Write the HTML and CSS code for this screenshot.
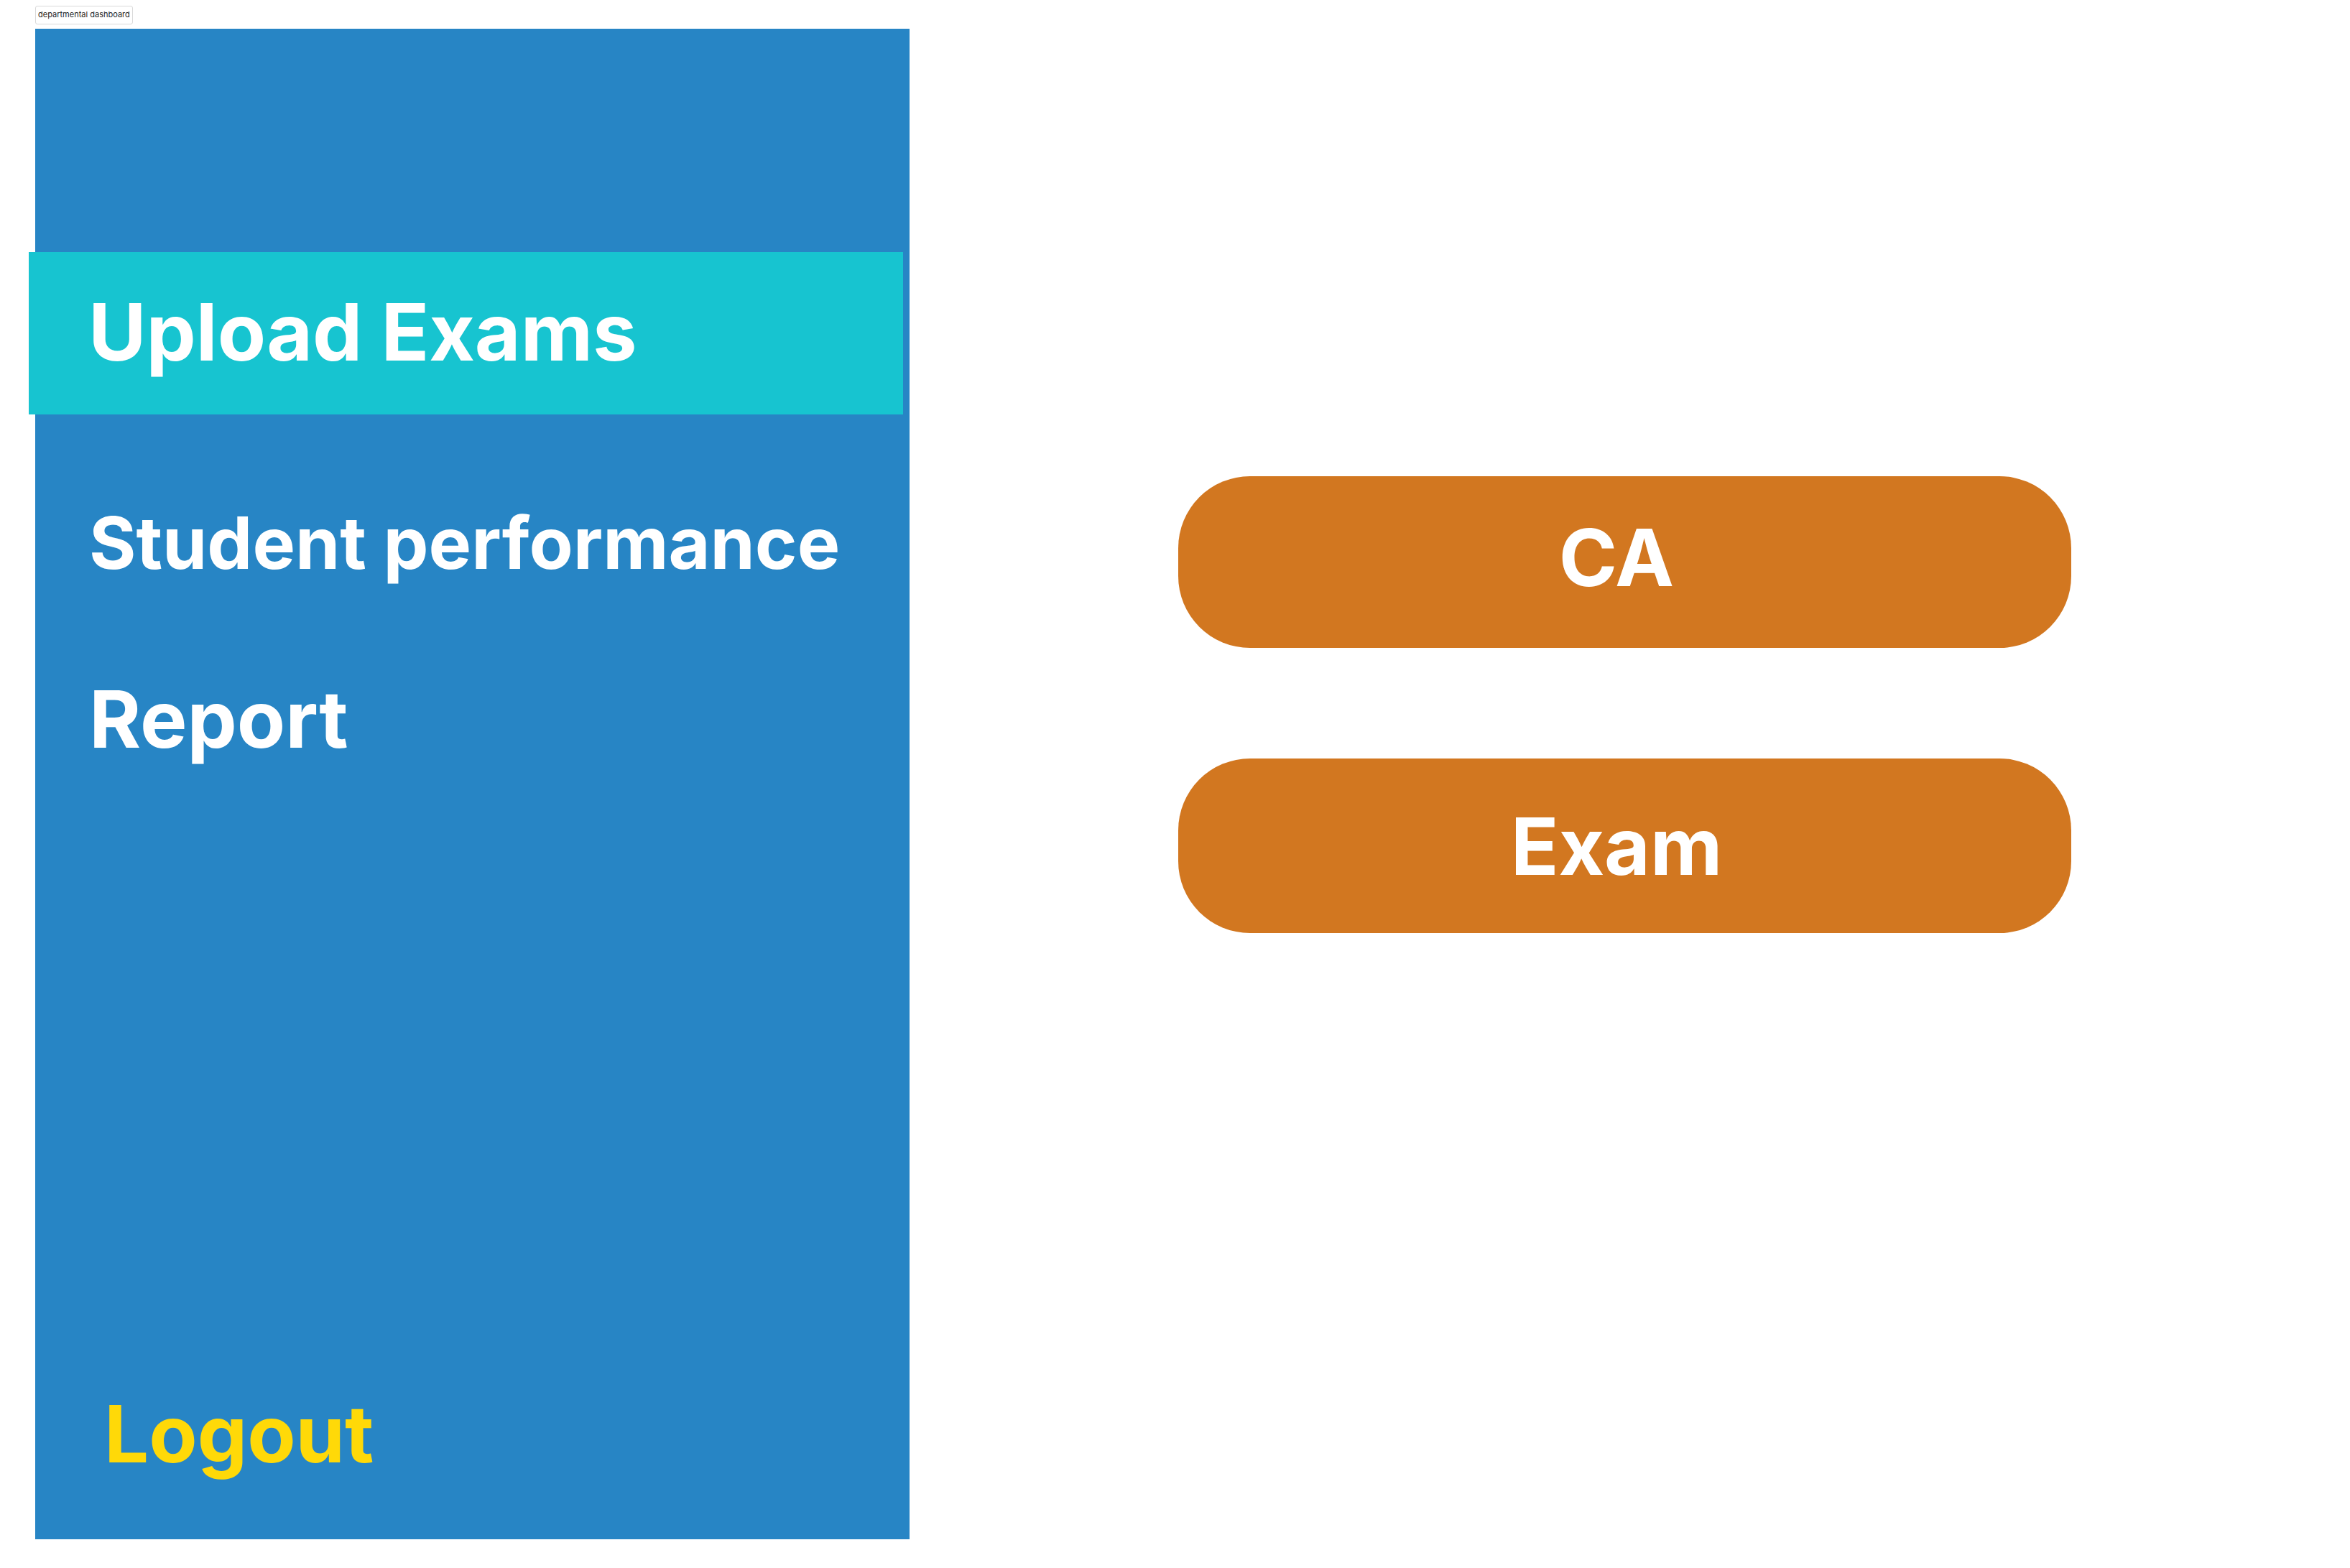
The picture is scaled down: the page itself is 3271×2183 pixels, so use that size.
FILE: index.html
```html
<!DOCTYPE html>
<html lang="en">
<head>
  <meta charset="utf-8">
  <meta name="viewport" content="width=device-width, initial-scale=1">
  <title>departmental dashboard</title>
  <link rel="stylesheet" href="styles.css">
</head>
<body class="page">
  <header class="page-header">
    <h1 class="page-label">departmental dashboard</h1>
  </header>
  <div class="layout">
    <aside class="sidebar">
      <nav class="nav">
        <a class="nav-link nav-link-active" href="#upload" aria-current="page">Upload Exams</a>
        <a class="nav-link nav-link-long" href="#performance">Student performance</a>
        <a class="nav-link" href="#report">Report</a>
      </nav>
      <a class="nav-link logout" href="#logout">Logout</a>
    </aside>
    <main class="content">
      <button class="choice choice-ca" type="button">CA</button>
      <button class="choice choice-exam" type="button">Exam</button>
    </main>
  </div>
</body>
</html>
```
FILE: styles.css
```css
* {
  box-sizing: border-box;
}

.page {
  display: flex;
  flex-direction: column;
  min-height: 100vh;
  margin: 0;
  padding: 8px 0 40px 49px;
  background: #fff;
  font-family: Inter, "Liberation Sans", sans-serif;
}

.page-header {
  display: flex;
  margin-bottom: 6px;
}

.page-label {
  margin: 0;
  padding: 3px 3px 5px;
  border: 1px solid #d9d9d9;
  border-radius: 3px;
  color: #1e1e1e;
  font-size: 11px;
  font-weight: 400;
  line-height: 16px;
}

.layout {
  display: grid;
  flex: 1;
  grid-template-columns: 1217fr 2005fr;
}

.sidebar {
  display: flex;
  flex-direction: column;
  justify-content: space-between;
  padding: 311px 0 80px;
  background: #2785c5;
}

.nav {
  display: flex;
  flex-direction: column;
  gap: 118px;
}

.nav-link {
  padding-left: 75px;
  color: #fff;
  font-size: 110px;
  font-weight: 700;
  line-height: 134px;
  text-decoration: none;
  white-space: nowrap;
}

/* The current item is shifted out past the sidebar's left edge. */
.nav-link-active {
  margin: 0 9px 0 -9px;
  padding: 44px 0 48px 83px;
  background: #17c4d0;
}

.nav-link-long {
  font-size: 100px;
  line-height: 121px;
}

.logout {
  padding-left: 96px;
  color: #ffd908;
}

.content {
  display: flex;
  flex-direction: column;
  gap: 154px;
  padding: 623px 388px 0 374px;
}

.choice {
  border: 0;
  border-radius: 100px;
  background: #d27720;
  color: #fff;
  font-family: inherit;
  font-size: 110px;
  font-weight: 700;
  line-height: 134px;
  text-align: center;
  cursor: pointer;
}

.choice-ca {
  padding: 46px 23px 59px 0;
}

.choice-exam {
  padding: 55px 23px 54px 0;
}
```
